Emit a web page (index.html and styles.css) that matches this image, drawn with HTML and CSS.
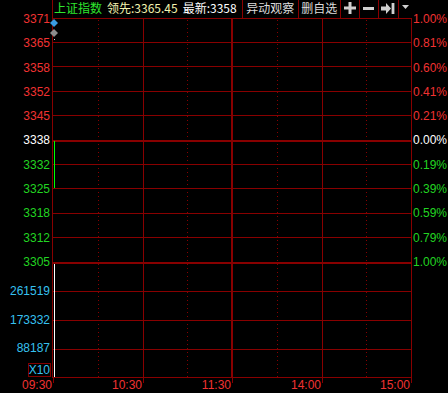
FILE: index.html
```html
<!DOCTYPE html>
<html lang="zh">
<head>
<meta charset="utf-8">
<title>上证指数 分时</title>
<link rel="stylesheet" href="styles.css">
</head>
<body>
<div class="screen">
  <div class="axis-left">
    <div class="price-labels">
      <span class="up">3371</span>
      <span class="up">3365</span>
      <span class="up">3358</span>
      <span class="up">3352</span>
      <span class="up">3345</span>
      <span class="flat">3338</span>
      <span class="down">3332</span>
      <span class="down">3325</span>
      <span class="down">3318</span>
      <span class="down">3312</span>
      <span class="down">3305</span>
    </div>
    <div class="vol-labels">
      <span>261519</span>
      <span>173332</span>
      <span>88187</span>
    </div>
    <div class="scale"><span class="scale-box">X10</span></div>
  </div>

  <div class="main">
    <div class="topbar">
      <span class="name">上证指数</span>
      <span class="lead">领先:3365.45</span>
      <span class="last">最新:3358</span>
      <div class="tools">
        <button class="tool w-wide">异动观察</button>
        <button class="tool w-mid">删自选</button>
        <button class="tool w-icon" aria-label="add">
          <svg width="12" height="12" viewBox="0 0 12 12"><path d="M4.5 0h3v4.5H12v3H7.5V12h-3V7.5H0v-3h4.5z" fill="#cfcfcf"/></svg>
        </button>
        <button class="tool w-icon" aria-label="remove">
          <svg width="11" height="3" viewBox="0 0 11 3"><rect width="11" height="3" fill="#cfcfcf"/></svg>
        </button>
        <button class="tool w-icon2" aria-label="end">
          <svg width="14" height="11" viewBox="0 0 14 11"><path d="M0 3.5h5V0l5 5.5-5 5.5V7.5H0z" fill="#cfcfcf"/><rect x="10.6" y="0" width="2.8" height="11" fill="#cfcfcf"/></svg>
        </button>
        <button class="tool w-drop" aria-label="menu">
          <svg width="7" height="4" viewBox="0 0 7 4"><path d="M0 0h7L3.5 4z" fill="#cfcfcf"/></svg>
        </button>
      </div>
    </div>
    <svg class="plot" width="358" height="360" viewBox="0 0 358 360" shape-rendering="crispEdges">
      <g fill="#880000">
        <rect x="0" y="0" width="358" height="1"/>
        <rect x="0" y="24" width="358" height="1"/>
        <rect x="0" y="48" width="358" height="1"/>
        <rect x="0" y="73" width="358" height="1"/>
        <rect x="0" y="97" width="358" height="1"/>
        <rect x="0" y="122" width="358" height="2"/>
        <rect x="0" y="146" width="358" height="1"/>
        <rect x="0" y="170" width="358" height="1"/>
        <rect x="0" y="195" width="358" height="1"/>
        <rect x="0" y="219" width="358" height="1"/>
        <rect x="0" y="244" width="358" height="2"/>
        <rect x="0" y="273" width="358" height="1"/>
        <rect x="0" y="302" width="358" height="1"/>
        <rect x="0" y="331" width="358" height="1"/>
        <rect x="0" y="359" width="358" height="1"/>
        <rect x="90" y="0" width="1" height="360"/>
        <rect x="178" y="0" width="2" height="360"/>
        <rect x="269" y="0" width="1" height="360"/>
      </g>
      <g stroke="#880000" stroke-width="1" stroke-dasharray="1 3">
        <line x1="45.5" y1="2" x2="45.5" y2="359"/>
        <line x1="134.5" y1="2" x2="134.5" y2="359"/>
        <line x1="224.5" y1="2" x2="224.5" y2="359"/>
        <line x1="313.5" y1="2" x2="313.5" y2="359"/>
      </g>
      <rect x="1" y="123" width="1" height="47" fill="#00ff00"/>
      <rect x="1" y="246" width="1" height="113" fill="#ffffff"/>
      <polygon points="1,1 5,5 1,9 -3,5" fill="#3a9be0" shape-rendering="auto"/>
      <polygon points="1,11 5,15 1,19 -3,15" fill="#8c8c8c" shape-rendering="auto"/>
      <rect x="1" y="21" width="1" height="1" fill="#cccccc"/>
    </svg>
  </div>

  <div class="axis-right">
    <div class="price-labels">
      <span class="up">1.00%</span>
      <span class="up">0.81%</span>
      <span class="up">0.60%</span>
      <span class="up">0.41%</span>
      <span class="up">0.21%</span>
      <span class="flat">0.00%</span>
      <span class="down">0.19%</span>
      <span class="down">0.39%</span>
      <span class="down">0.59%</span>
      <span class="down">0.79%</span>
      <span class="down">1.00%</span>
    </div>
  </div>

  <div class="xaxis">
    <span class="tick">09:30</span>
    <span class="tick">10:30</span>
    <span class="tick">11:30</span>
    <span class="tick">14:00</span>
    <span class="tick">15:00</span>
    <span></span>
  </div>
</div>
</body>
</html>
```

FILE: styles.css
```css
html, body {
  margin: 0;
  padding: 0;
  background: #000;
}

body {
  width: 448px;
  height: 393px;
  overflow: hidden;
  font-family: "Liberation Sans", "Noto Sans CJK SC", sans-serif;
  font-size: 12px;
}

.screen {
  display: grid;
  grid-template-columns: 52px 360px 36px;
  grid-template-rows: 378px 15px;
}

/* colours */
.up { color: #f03232; }
.down { color: #22d422; }
.flat { color: #ffffff; }

/* left axis */
.axis-left {
  text-align: right;
  padding: 7px 2px 0 0;
}

.price-labels span {
  display: block;
  height: 24.3px;
  line-height: 24.3px;
}

.vol-labels {
  margin-top: 3px;
  color: #36c0f0;
}

.vol-labels span {
  display: block;
  height: 28.5px;
  line-height: 28.5px;
}

.scale {
  height: 15px;
  display: flex;
  justify-content: flex-end;
  margin-right: -1px;
}

.scale-box {
  border: 1px solid #800000;
  color: #36c0f0;
  line-height: 12px;
  height: 12px;
  padding: 0;
}

/* main plot column */
.main {
  border-left: 1px solid #880000;
  border-right: 1px solid #880000;
  display: flex;
  flex-direction: column;
}

.topbar {
  height: 18px;
  display: flex;
  align-items: center;
  gap: 5px;
  font-family: "Noto Sans CJK SC", "Liberation Sans", sans-serif;
  font-size: 12px;
  line-height: 14px;
  white-space: nowrap;
}

.topbar .name,
.topbar .lead,
.topbar .last {
  padding-bottom: 2px;
}

.name {
  color: #2ee62e;
  padding-left: 1px;
}

.lead {
  color: #f4f4b0;
}

.last {
  color: #ffffff;
}

.tools {
  margin-left: auto;
  display: flex;
  height: 18px;
}

.tool {
  box-sizing: border-box;
  height: 18px;
  margin: 0;
  padding: 0 0 2px 0;
  border: 0;
  border-left: 1px solid #880000;
  background: #000;
  color: #dcdcdc;
  font: inherit;
  line-height: 14px;
  display: flex;
  align-items: center;
  justify-content: center;
}

.tool svg {
  display: block;
}

.w-wide { width: 56px; }
.w-mid { width: 42px; }
.w-icon { width: 19px; }
.w-icon2 { width: 20px; }
.w-drop { width: 14px; padding-bottom: 4px; }

.plot {
  display: block;
  overflow: visible;
}

/* right axis */
.axis-right {
  padding: 7px 0 0 1px;
  text-align: left;
}

/* time axis */
.xaxis {
  grid-column: 1 / -1;
  display: grid;
  grid-template-columns: 54px 90px 89px 90px 89px 36px;
  color: #f03232;
  line-height: 15px;
  height: 15px;
}

.xaxis .tick {
  text-align: right;
  padding-right: 2px;
  background: linear-gradient(#880000, #880000) right top / 1px 5px no-repeat;
}
```
